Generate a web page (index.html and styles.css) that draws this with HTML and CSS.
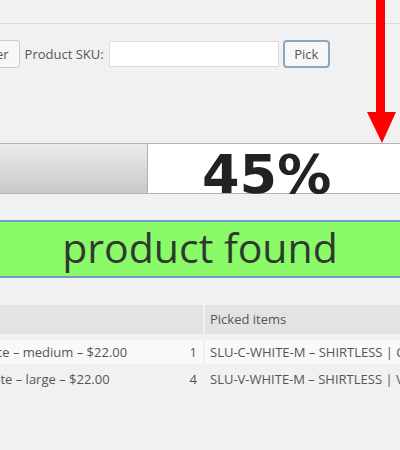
FILE: index.html
```html
<!DOCTYPE html>
<html><head>
<meta http-equiv="Content-Type" content="text/html; charset=utf-8">
<title>Pick order</title>
<link rel="stylesheet" href="styles.css"></head>

<body>
<div class="wrap">
<div class="topbar"></div>

<div class="toolbar">
<button class="button">Filter order</button>
<label for="sku">Product SKU:</label>
<input id="sku" type="text" class="skuInput">
<button class="button pick">Pick</button>
</div>

<div class="progress">
<div class="fill"></div>
<div class="rest"><span class="pct">45%</span></div>
</div>

<div class="notice">product found</div>

<div class="items">
<div class="cell head">Product</div>
<div class="cell head">Picked items</div>
<div class="cell odd"><span class="name">SHIRTLESS | Crew Neck – White – medium – $22.00</span><span class="qty">1</span></div>
<div class="cell odd">SLU-C-WHITE-M – SHIRTLESS | Crew Neck – White – medium</div>
<div class="cell"><span class="name">SHIRTLESS | V-Neck Tee – White – large – $22.00</span><span class="qty">4</span></div>
<div class="cell">SLU-V-WHITE-M – SHIRTLESS | V-Neck – White – medium</div>
</div>
</div>

<!-- red arrow pointing at the bar -->
<svg class="arrow" width="31" height="145" viewBox="0 0 31 145">
<rect x="10" y="0" width="9" height="116" fill="#f00"/>
<path d="M1 112 L30 112 L16 143 Z" fill="#f00"/>
</svg>
</body>
</html>
```

FILE: styles.css
```css
body {
	margin: 0;
	background-color: #f1f1f1;
	font-family: "Open Sans", sans-serif;
	font-size: 13px;
	color: #444;
	overflow: hidden;
	position: relative;
	height: 450px;
}
/* the screenshot is a crop, the page starts left of the window */
.wrap {
	margin-left: -160px;
	width: 720px;
}
.topbar {
	height: 23px;
	border-bottom: 1px solid #dcdcdc;
}

.toolbar {
	display: flex;
	align-items: center;
	height: 28px;
	margin-top: 16px;
}
.toolbar label {
	margin: 0 5px;
	color: #555;
}
.button {
	height: 28px;
	padding: 0 10px;
	margin-left: 90px;
	background-color: #f7f7f7;
	border: 1px solid #cccccc;
	border-radius: 3px;
	font-family: "Open Sans", sans-serif;
	font-size: 13px;
	color: #555;
}
.skuInput {
	box-sizing: border-box;
	width: 170px;
	height: 26px;
	margin: 0 4px 0 0;
	border: 1px solid #dddddd;
	background-color: #fff;
}
.pick {
	margin-left: 0;
	width: 47px;
	padding: 0;
	border: 2px solid #8ba6bd;
	border-radius: 4px;
}

.progress {
	display: flex;
	height: 49px;
	margin-top: 75px;
	border-top: 1px solid #b4b4b4;
	border-bottom: 1px solid #b4b4b4;
}
.fill {
	width: 307px;
	border-right: 1px solid #b0b0b0;
	background: linear-gradient(to bottom, #ebebeb 0%, #c9c9c9 100%);
}
.rest {
	flex: 1;
	background-color: #fff;
	padding-left: 54px;
}
.pct {
	font-family: "DejaVu Sans", sans-serif;
	font-weight: bold;
	font-size: 54px;
	line-height: 62px;
	color: #222;
}

.notice {
	margin-top: 26px;
	height: 54px;
	line-height: 50px;
	border-top: 2px solid #6f9ec0;
	border-bottom: 2px solid #6f9ec0;
	background-color: #8afa68;
	text-align: center;
	font-size: 41px;
	color: #2f3a2f;
}

.items {
	display: grid;
	grid-template-columns: 389px 1fr;
	column-gap: 2px;
	margin-top: 27px;
	margin-left: -26px;
	color: #555;
}
.cell {
	display: flex;
	white-space: nowrap;
	overflow: hidden;
	line-height: 26px;
	padding: 0 6px 0 5px;
}
.head {
	background-color: #e4e3e3;
	line-height: 29px;
	margin-bottom: 6px;
}
.odd {
	background-color: #f9f9f9;
	line-height: 24px;
	margin-bottom: 2px;
}
.name {
	flex: 1;
}

.arrow {
	position: absolute;
	top: 0;
	left: 366px;
}
```
